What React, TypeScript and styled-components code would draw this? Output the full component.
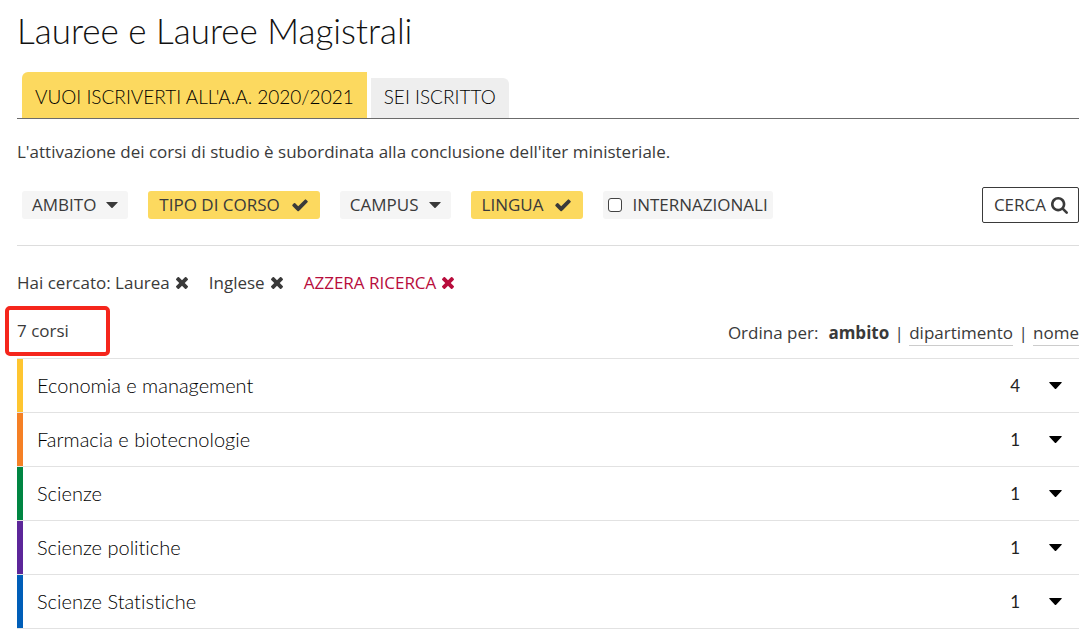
import React from "react";
import styled, { createGlobalStyle, css } from "styled-components";

const ink = "#3a3a3a";
const yellow = "#fcd95f";
const bodyFont = `"Open Sans", "Noto Sans", sans-serif`;
const titleFont = `Lato, "Open Sans", sans-serif`;

const GlobalStyle = createGlobalStyle`
  *, *::before, *::after { box-sizing: border-box; }
  body {
    margin: 0;
    background: #fff;
    color: ${ink};
    font-family: ${bodyFont};
    font-size: 17px;
    line-height: 24px;
    font-variant-ligatures: none;
  }
  button, input { font: inherit; color: inherit; }
  button { cursor: pointer; font-variant-ligatures: none; }
  a { color: inherit; text-decoration: none; }
`;

const Page = styled.main`
  padding: 8px 1px 0 17px;
`;

const Title = styled.h1`
  margin: 0 0 20px;
  color: #111;
  font-family: ${titleFont};
  font-weight: 300;
  font-size: 35px;
  line-height: 44px;
`;

const Tabs = styled.div`
  display: flex;
  align-items: flex-end;
  gap: 4px;
  padding-left: 5px;
  border-bottom: 1px solid #6b6b6b;
`;

const Tab = styled.button<{ $active?: boolean }>`
  height: 40px;
  padding: 0 13px 2px;
  border: 0;
  border-radius: 0 6px 0 0;
  background: #eee;
  color: #000;
  font-family: ${titleFont};
  font-size: 19px;
  font-weight: 300;
  line-height: 38px;
  ${(p) =>
    p.$active &&
    css`
      height: 46px;
      padding-top: 6px;
      border-radius: 6px 0 0 0;
      background: ${yellow};
    `}
`;

const Notice = styled.p`
  margin: 21px 0 23px;
`;

const FilterBar = styled.form`
  display: flex;
  align-items: center;
  gap: 20px;
  padding: 0 0 22px 5px;
  border-bottom: 1px solid #ddd;
`;

const pill = css`
  display: flex;
  align-items: center;
  height: 28px;
  border: 0;
  border-radius: 3px;
  background: #f5f5f5;
  line-height: 28px;
`;

const FilterButton = styled.button<{ $active?: boolean }>`
  ${pill}
  gap: ${(p) => (p.$active ? 11 : 10)}px;
  padding: 0 ${(p) => (p.$active ? 11 : 10)}px;
  ${(p) => p.$active && `background: ${yellow};`}
`;

const CheckFilter = styled.label`
  ${pill}
  gap: 10px;
  padding: 0 5px;
`;

const Checkbox = styled.input`
  appearance: none;
  width: 14px;
  height: 14px;
  margin: 0;
  border: 1px solid #444;
  border-radius: 3px;
  background: #fff;
`;

const SearchButton = styled.button`
  display: flex;
  align-items: center;
  gap: 5px;
  height: 36px;
  margin-left: auto;
  padding: 0 10px 0 11px;
  border: 1px solid ${ink};
  border-radius: 2px;
  background: #fff;
`;

const Criteria = styled.div`
  display: flex;
  align-items: center;
  gap: 21px;
  margin-top: 25px;
`;

const Criterion = styled.span`
  display: flex;
  align-items: center;
  gap: 6px;
`;

const RemoveButton = styled.button`
  display: flex;
  padding: 0;
  border: 0;
  background: none;
`;

const ResetLink = styled.a`
  display: flex;
  align-items: center;
  gap: 6px;
  color: #b80d3c;
`;

const Summary = styled.div`
  display: flex;
  align-items: center;
  justify-content: space-between;
  margin-top: 11px;
  height: 50px;
`;

const Count = styled.p`
  display: flex;
  align-items: center;
  width: 105px;
  height: 50px;
  margin: 0 0 0 -12px;
  padding-left: 8px;
  border: 4px solid #f5261c;
  border-radius: 5px;
`;

const Sorting = styled.div`
  display: flex;
  align-items: center;
  gap: 8px;
  padding-top: 4px;
`;

const SortCurrent = styled.strong`
  margin-left: 2px;
`;

const SortLink = styled.a`
  border-bottom: 1px solid #ccc;
`;

const Divider = styled.span`
  width: 4px;
  display: flex;
  justify-content: center;
`;

const AreaList = styled.ul`
  margin: 2px 0 0;
  padding: 0;
  list-style: none;
  border-top: 1px solid #e2e2e2;
`;

const Area = styled.li`
  border-bottom: 1px solid #e2e2e2;
`;

const AreaButton = styled.button<{ $color: string }>`
  display: flex;
  align-items: center;
  width: 100%;
  height: 53px;
  padding: 0 17px 0 14px;
  border: 0;
  border-left: 6px solid ${(p) => p.$color};
  background: none;
  color: #000;
  text-align: left;
`;

const AreaName = styled.span`
  padding-bottom: 2px;
  font-family: ${titleFont};
  font-size: 20px;
  font-weight: 300;
`;

const AreaCount = styled.span`
  margin: 0 29px 0 auto;
  color: #222;
  font-family: ${titleFont};
`;

const Svg = styled.svg`
  display: block;
  flex: none;
  fill: currentColor;
`;

const Caret = ({ width = 12, height = 6 }: { width?: number; height?: number }) => (
  <Svg width={width} height={height} viewBox="0 0 12 6" preserveAspectRatio="none" aria-hidden="true">
    <path d="M.7 0h10.6q.7 0 .4.6L6.600 5.700q-.6.600-1.200 0L.3.600Q0 0 .7 0z" />
  </Svg>
);

const Check = () => (
  <Svg width="18" height="18" viewBox="0 0 1792 1792" aria-hidden="true">
    <path d="M1671 566q0 40-28 68l-724 724-136 136q-28 28-68 28t-68-28l-136-136-362-362q-28-28-28-68t28-68l136-136q28-28 68-28t68 28l294 295 656-657q28-28 68-28t68 28l136 136q28 28 28 68z" />
  </Svg>
);

const Cross = () => (
  <Svg width="12" height="12" viewBox="302 368 1188 1188" aria-hidden="true">
    <path d="M1490 1322q0 40-28 68l-136 136q-28 28-68 28t-68-28l-294-294-294 294q-28 28-68 28t-68-28l-136-136q-28-28-28-68t28-68l294-294-294-294q-28-28-28-68t28-68l136-136q28-28 68-28t68 28l294 294 294-294q28-28 68-28t68 28l136 136q28 28 28 68t-28 68l-294 294 294 294q28 28 28 68z" />
  </Svg>
);

const Lens = () => (
  <Svg width="17" height="17" viewBox="64 128 1664 1664" aria-hidden="true">
    <path d="M1216 832q0-185-131.5-316.5t-316.5-131.5-316.5 131.5-131.5 316.5 131.5 316.5 316.5 131.5 316.5-131.5 131.5-316.5zm512 832q0 52-38 90t-90 38q-54 0-90-38l-343-342q-179 124-399 124-143 0-273.5-55.5t-225-150-150-225-55.5-273.5 55.5-273.5 150-225 225-150 273.5-55.5 273.5 55.5 225 150 150 225 55.5 273.5q0 220-124 399l343 343q37 37 37 90z" />
  </Svg>
);

const areas = [
  { name: "Economia e management", count: 4, color: "#fec530" },
  { name: "Farmacia e biotecnologie", count: 1, color: "#f58025" },
  { name: "Scienze", count: 1, color: "#008542" },
  { name: "Scienze politiche", count: 1, color: "#5c2699" },
  { name: "Scienze Statistiche", count: 1, color: "#005eb8" },
];

export default function App() {
  return (
    <>
      <GlobalStyle />
      <Page>
        <Title>Lauree e Lauree Magistrali</Title>
        <Tabs role="tablist">
          <Tab type="button" role="tab" aria-selected="true" $active>
            VUOI ISCRIVERTI ALL'A.A. 2020/2021
          </Tab>
          <Tab type="button" role="tab" aria-selected="false">
            SEI ISCRITTO
          </Tab>
        </Tabs>
        <Notice>L'attivazione dei corsi di studio è subordinata alla conclusione dell'iter ministeriale.</Notice>
        <FilterBar onSubmit={(e) => e.preventDefault()}>
          <FilterButton type="button" aria-haspopup="true">
            AMBITO <Caret />
          </FilterButton>
          <FilterButton type="button" aria-haspopup="true" $active>
            TIPO DI CORSO <Check />
          </FilterButton>
          <FilterButton type="button" aria-haspopup="true">
            CAMPUS <Caret />
          </FilterButton>
          <FilterButton type="button" aria-haspopup="true" $active>
            LINGUA <Check />
          </FilterButton>
          <CheckFilter>
            <Checkbox type="checkbox" />
            INTERNAZIONALI
          </CheckFilter>
          <SearchButton type="submit">
            CERCA <Lens />
          </SearchButton>
        </FilterBar>
        <Criteria>
          <Criterion>
            Hai cercato: Laurea
            <RemoveButton type="button" aria-label="Rimuovi Laurea">
              <Cross />
            </RemoveButton>
          </Criterion>
          <Criterion>
            Inglese
            <RemoveButton type="button" aria-label="Rimuovi Inglese">
              <Cross />
            </RemoveButton>
          </Criterion>
          <ResetLink href="#azzera">
            AZZERA RICERCA <Cross />
          </ResetLink>
        </Criteria>
        <Summary>
          <Count>7 corsi</Count>
          <Sorting>
            <span>Ordina per:</span>
            <SortCurrent>ambito</SortCurrent>
            <Divider>|</Divider>
            <SortLink href="#dipartimento">dipartimento</SortLink>
            <Divider>|</Divider>
            <SortLink href="#nome">nome</SortLink>
          </Sorting>
        </Summary>
        <AreaList>
          {areas.map((area) => (
            <Area key={area.name}>
              <AreaButton type="button" aria-expanded="false" $color={area.color}>
                <AreaName>{area.name}</AreaName>
                <AreaCount>{area.count}</AreaCount>
                <Caret width={13} height={7} />
              </AreaButton>
            </Area>
          ))}
        </AreaList>
      </Page>
    </>
  );
}
